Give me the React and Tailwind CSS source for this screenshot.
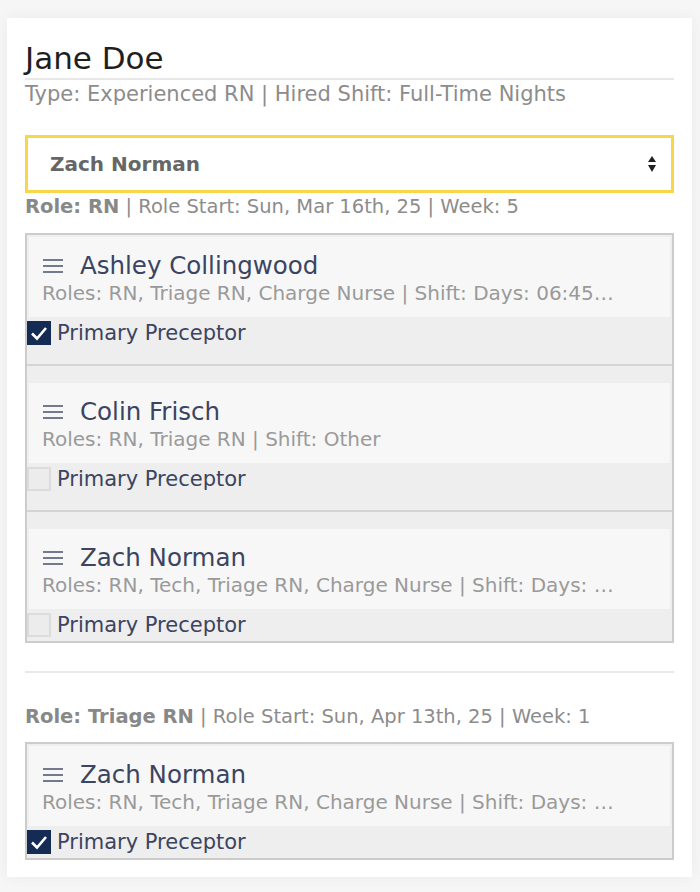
const PRECEPTEES = [
  {
    role: 'RN',
    start: 'Sun, Mar 16th, 25',
    week: 5,
    preceptors: [
      { name: 'Ashley Collingwood', info: 'Roles: RN, Triage RN, Charge Nurse | Shift: Days: 06:45…', primary: true },
      { name: 'Colin Frisch', info: 'Roles: RN, Triage RN | Shift: Other', primary: false },
      { name: 'Zach Norman', info: 'Roles: RN, Tech, Triage RN, Charge Nurse | Shift: Days: …', primary: false },
    ],
  },
  {
    role: 'Triage RN',
    start: 'Sun, Apr 13th, 25',
    week: 1,
    preceptors: [
      { name: 'Zach Norman', info: 'Roles: RN, Tech, Triage RN, Charge Nurse | Shift: Days: …', primary: true },
    ],
  },
];

function DragHandle() {
  return (
    <svg width="20" height="14" viewBox="0 0 20 14" className="shrink-0">
      <g stroke="#3b4460" strokeWidth="1.4">
        <line x1="0" y1="1" x2="20" y2="1" />
        <line x1="0" y1="7" x2="20" y2="7" />
        <line x1="0" y1="13" x2="20" y2="13" />
      </g>
    </svg>
  );
}

function Checkbox({ checked }) {
  if (checked) {
    return (
      <span className="w-6 h-6 shrink-0 bg-[#142b53] flex items-center justify-center">
        <svg width="24" height="24" viewBox="0 0 24 24">
          <polyline points="5,12.5 10,17.5 19,7" fill="none" stroke="#fff" strokeWidth="2.6" />
        </svg>
      </span>
    );
  }
  return <span className="w-6 h-6 shrink-0 bg-[#ececec] border-2 border-[#dcdcdc]" />;
}

function PreceptorItem({ item, last }) {
  return (
    <div className={last ? 'pt-[2px]' : 'pt-[2px] border-b-2 border-[#d4d4d4] pb-[15px] mb-[15px]'}>
      <div className="mx-[2px] bg-[#f7f7f7] pl-[13px] pr-[14px] pt-[16px] pb-[12px]">
        <div className="flex items-center gap-[17px] h-[26px] pl-[1px]">
          <DragHandle />
          <span className="text-[24.5px] leading-[26px] text-[#3b4460] whitespace-nowrap">{item.name}</span>
        </div>
        <div className="mt-[2px] text-[20px] leading-[24px] text-[#9a9a9a] whitespace-nowrap overflow-hidden">
          {item.info}
        </div>
      </div>
      <label className="flex items-center gap-[6px] pt-[4px] pb-[4px]">
        <Checkbox checked={item.primary} />
        <span className="text-[21px] leading-[24px] text-[#3b4460]">Primary Preceptor</span>
      </label>
    </div>
  );
}

function RoleLine({ role, start, week }) {
  return (
    <p className="text-[19.5px] leading-[22px] text-[#8c8c8c] whitespace-nowrap">
      <span className="font-bold text-[#888]">Role: {role}</span> | Role Start: {start} | Week: {week}
    </p>
  );
}

export default function App() {
  const [first, second] = PRECEPTEES;

  return (
    <div className="min-h-screen bg-[#f6f6f6] pt-[18px] pl-[7px] pr-[8px] font-[family-name:'DejaVu_Sans',sans-serif]">
      <div className="bg-white shadow-[0_0_14px_rgba(0,0,0,0.05)] px-[18px] pt-[22px] pb-[17px]">
        {/* Header */}
        <h2 className="text-[31px] leading-[36px] text-[#1f1f1f]">Jane Doe</h2>
        <div className="h-[2px] bg-[#e8e8e8] mt-[2px]" />
        <p className="mt-[3px] text-[21px] leading-[22px] text-[#8c8c8c] whitespace-nowrap">
          Type: Experienced RN | Hired Shift: Full-Time Nights
        </p>

        {/* Preceptee select */}
        <div className="mt-[30px] h-[58px] border-[3px] border-[#f8d649] flex items-center justify-between pl-[22px] pr-[15px]">
          <span className="text-[20px] font-bold text-[#666]">Zach Norman</span>
          <svg width="8" height="16" viewBox="0 0 8 16">
            <polygon points="4,0 8,6 0,6" fill="#222" />
            <polygon points="0,9 8,9 4,16" fill="#222" />
          </svg>
        </div>

        <div className="mt-[3px]">
          <RoleLine role={first.role} start={first.start} week={first.week} />
        </div>
        <div className="mt-[15px] border-2 border-[#cccccc] bg-[#eeeeee]">
          {first.preceptors.map((p, i) => (
            <PreceptorItem key={p.name} item={p} last={i === first.preceptors.length - 1} />
          ))}
        </div>

        <div className="h-[2px] bg-[#e8e8e8] mt-[28px]" />

        <div className="mt-[33px]">
          <RoleLine role={second.role} start={second.start} week={second.week} />
        </div>
        <div className="mt-[14px] border-2 border-[#cccccc] bg-[#eeeeee]">
          {second.preceptors.map((p, i) => (
            <PreceptorItem key={p.name + i} item={p} last={i === second.preceptors.length - 1} />
          ))}
        </div>
      </div>
    </div>
  );
}
